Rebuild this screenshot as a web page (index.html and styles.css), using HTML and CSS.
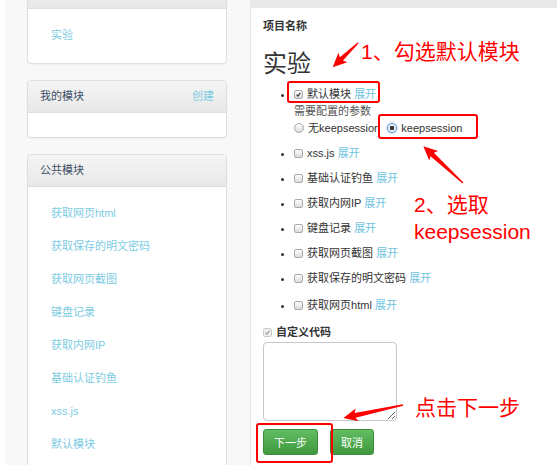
FILE: index.html
```html
<!DOCTYPE html>
<html lang="zh-CN">
<head>
  <meta charset="UTF-8">
  <title>项目 - 实验</title>
  <link rel="stylesheet" href="styles.css">
</head>
<body>

  <div class="page">

    <div class="sidebar">
      <div class="card card-first">
        <div class="card-head"></div>
        <ul class="card-list">
          <li><a href="#">实验</a></li>
        </ul>
      </div>

      <div class="card">
        <div class="card-head">我的模块 <a href="#" class="head-link">创建</a></div>
        <div class="card-empty"></div>
      </div>

      <div class="card">
        <div class="card-head">公共模块</div>
        <ul class="card-list">
          <li><a href="#">获取网页html</a></li>
          <li><a href="#">获取保存的明文密码</a></li>
          <li><a href="#">获取网页截图</a></li>
          <li><a href="#">键盘记录</a></li>
          <li><a href="#">获取内网IP</a></li>
          <li><a href="#">基础认证钓鱼</a></li>
          <li><a href="#">xss.js</a></li>
          <li><a href="#">默认模块</a></li>
        </ul>
      </div>
    </div>

    <div class="main">
      <div class="topbar"></div>
      <div class="content">
        <div class="field-label">项目名称</div>
        <h2 class="project-name">实验</h2>

        <ul class="modules">
          <li>
            <span class="cb on"><svg viewBox="0 0 10 10"><path d="M2.2 5.2 L4.2 7.2 L7.8 2.6" fill="none" stroke="#333" stroke-width="1.6"/></svg></span>
            默认模块 <a href="#">展开</a>
            <div class="params">需要配置的参数</div>
            <div class="radios">
              <span class="rd"></span> 无keepsession
              <span class="rd on"></span> keepsession
            </div>
          </li>
          <li><span class="cb"></span> xss.js <a href="#">展开</a></li>
          <li><span class="cb"></span> 基础认证钓鱼 <a href="#">展开</a></li>
          <li><span class="cb"></span> 获取内网IP <a href="#">展开</a></li>
          <li><span class="cb"></span> 键盘记录 <a href="#">展开</a></li>
          <li><span class="cb"></span> 获取网页截图 <a href="#">展开</a></li>
          <li><span class="cb"></span> 获取保存的明文密码 <a href="#">展开</a></li>
          <li><span class="cb"></span> 获取网页html <a href="#">展开</a></li>
        </ul>

        <div class="custom-code">
          <span class="cb on off"><svg viewBox="0 0 10 10"><path d="M2.2 5.2 L4.2 7.2 L7.8 2.6" fill="none" stroke="#999" stroke-width="1.6"/></svg></span>
          自定义代码
        </div>
        <textarea class="code-box"></textarea>

        <div class="actions">
          <button class="btn">下一步</button>
          <button class="btn">取消</button>
        </div>
      </div>
    </div>

    <!-- red notes on top of the form -->
    <div class="notes">
      <svg class="arrows" width="557" height="465">
        <polygon points="0,-0.6 23,-2.2 21,-6.5 35,0 21,6.5 23,2.2 0,0.6" fill="#f00" transform="translate(358 43) rotate(136.2)"/>
        <polygon points="0,-0.7 42,-2.4 40,-6.5 54,0 40,6.5 42,2.4 0,0.7" fill="#f00" transform="translate(463 183) rotate(-137.2)"/>
        <polygon points="0,-0.7 49,-2.4 47,-6.5 61,0 47,6.5 49,2.4 0,0.7" fill="#f00" transform="translate(403 405) rotate(167.8)"/>
      </svg>
      <div class="mark mark-1"></div>
      <div class="mark mark-2"></div>
      <div class="mark mark-3"></div>
      <div class="note note-1">1、勾选默认模块</div>
      <div class="note note-2">2、选取<br>keepsession</div>
      <div class="note note-3">点击下一步</div>
    </div>

  </div>

</body>
</html>
```

FILE: styles.css
```css
body {
  margin: 0;
  background: #fff;
  font-family: "Liberation Sans", "Noto Sans CJK SC", sans-serif;
  font-size: 11px;
  color: #333;
}
a {
  color: #6fc4e0;
  text-decoration: none;
}
ul {
  margin: 0;
}

.page {
  position: relative;
  display: flex;
  height: 465px;
  overflow: hidden;
  padding-left: 5px;
}

/* left column */
.sidebar {
  width: 246px;
  flex-shrink: 0;
  box-sizing: border-box;
  background: #f8f8f8;
  border-right: 1px solid #e6e6e6;
  padding: 0 23px 0 22px;
}
.card {
  background: #fff;
  border: 1px solid #dedede;
  border-radius: 4px;
  box-shadow: 0 1px 1px rgba(0,0,0,0.04);
  margin-bottom: 16px;
  overflow: hidden;
}
.card-first {
  margin-top: -24px;
}
.card-head {
  display: flex;
  justify-content: space-between;
  height: 31px;
  line-height: 31px;
  padding: 0 12px;
  color: #3c4f66;
  background: linear-gradient(#f5f5f5, #e8e8e8);
  border-bottom: 1px solid #dedede;
}
.head-link {
  color: #7ccbe2;
}
.card-empty {
  height: 24px;
}
.card-list {
  list-style: none;
  padding: 10px 0 11px 23px;
}
.card-list li {
  line-height: 33px;
}
.card-list a {
  color: #7ccbe2;
}

/* right column */
.main {
  flex: 1;
}
.topbar {
  height: 8px;
  background: #e9e9e9;
}
.content {
  padding: 0 12px;
}
.field-label {
  margin-top: 10px;
  line-height: 16px;
  font-weight: bold;
}
.project-name {
  margin: 15px 0 0;
  font-size: 24px;
  line-height: 30px;
  font-weight: normal;
}
.modules {
  margin-top: 3px;
  padding-left: 31px;
}
.modules li {
  padding: 4px 0;
  line-height: 17px;
}
.modules li:last-child {
  padding-top: 6px;
}
.params {
  color: #555;
}

.cb, .rd {
  display: inline-block;
  box-sizing: border-box;
  width: 9px;
  height: 9px;
  margin-right: 1px;
  vertical-align: -0.5px;
  border: 1px solid #a9a9a9;
  background: linear-gradient(#fdfdfd, #dcdcdc);
}
.cb {
  border-radius: 2px;
}
.cb svg {
  display: block;
  width: 7px;
  height: 7px;
}
.cb.off {
  border-color: #ccc;
  background: #eee;
}
.rd {
  width: 10px;
  height: 10px;
  border-radius: 50%;
}
.rd.on {
  margin-left: 4px;
  border-color: #6e9bd1;
  background: radial-gradient(circle, #333 0 2px, #e8eef6 2.5px);
  box-shadow: 0 0 0 1px #c9d8ec;
}

.custom-code {
  margin-top: 6px;
  line-height: 16px;
  font-weight: bold;
}
.code-box {
  display: block;
  box-sizing: border-box;
  width: 134px;
  height: 79px;
  margin-top: 2px;
  border: 1px solid #c8c8c8;
  border-radius: 4px;
}
.actions {
  display: flex;
  gap: 12px;
  margin-top: 8px;
}
.btn {
  height: 26px;
  padding: 0 10px;
  font-family: inherit;
  font-size: 11px;
  color: #fff;
  border: 1px solid #3b8f3b;
  border-radius: 3px;
  background: linear-gradient(#62bd62, #3f9a3f);
}

/* annotations */
.notes {
  position: absolute;
  left: 0;
  top: 0;
  width: 557px;
  height: 465px;
  pointer-events: none;
}
.arrows {
  position: absolute;
  left: 0;
  top: 0;
}
.mark {
  position: absolute;
  border: 2px solid #f00;
  border-radius: 3px;
  box-sizing: border-box;
}
.mark-1 { left: 287px; top: 81px; width: 93px; height: 22px; }
.mark-2 { left: 378px; top: 114px; width: 100px; height: 25px; }
.mark-3 { left: 256px; top: 423px; width: 77px; height: 40px; }
.note {
  position: absolute;
  color: #f00;
  font-size: 21px;
  line-height: 27px;
}
.note-1 { left: 361px; top: 38px; }
.note-2 { left: 414px; top: 191px; }
.note-3 { left: 415px; top: 394px; }
```
